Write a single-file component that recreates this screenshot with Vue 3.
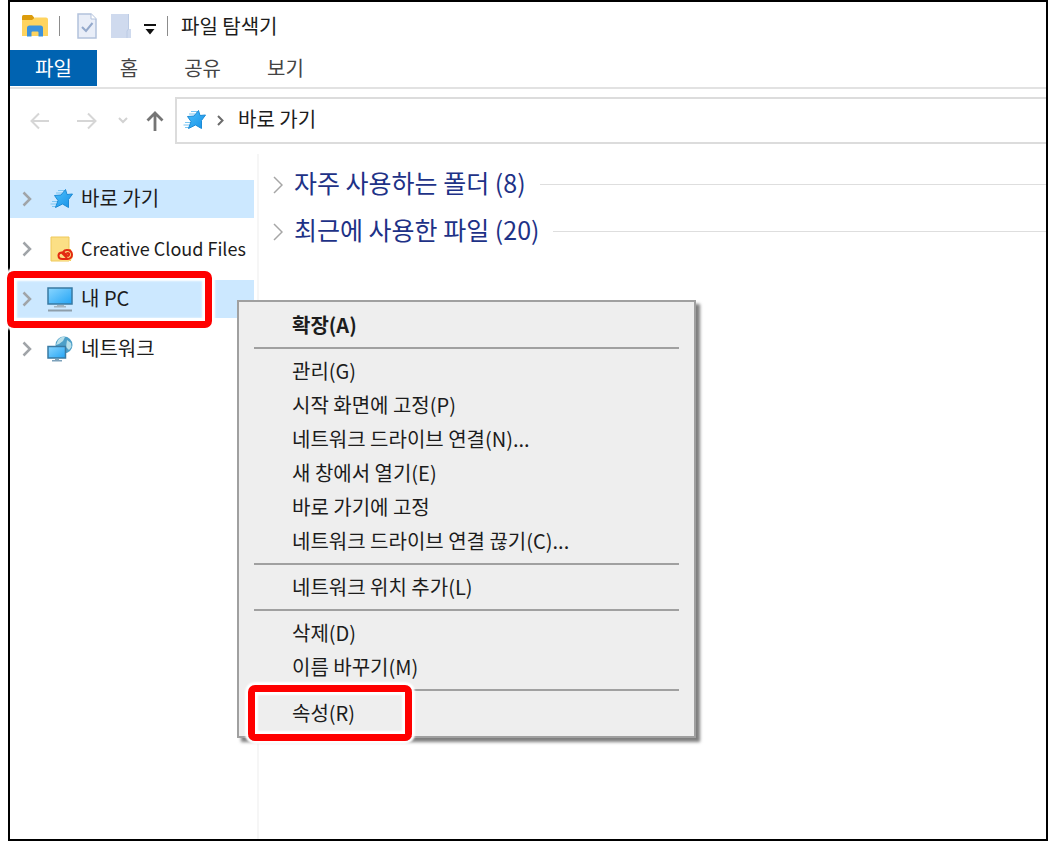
<script setup>
const tabs = ['파일', '홈', '공유', '보기']

const places = [
  { name: '바로 가기', icon: 'star', active: true },
  { name: 'Creative Cloud Files', icon: 'cloud', latin: true },
  { name: '내 PC', icon: 'pc', active: true, marked: true },
  { name: '네트워크', icon: 'network' },
]

const groups = ['자주 사용하는 폴더 (8)', '최근에 사용한 파일 (20)']

const menu = [
  [{ label: '확장(A)', strong: true }],
  [
    { label: '관리(G)' },
    { label: '시작 화면에 고정(P)' },
    { label: '네트워크 드라이브 연결(N)...' },
    { label: '새 창에서 열기(E)' },
    { label: '바로 가기에 고정' },
    { label: '네트워크 드라이브 연결 끊기(C)...' },
  ],
  [{ label: '네트워크 위치 추가(L)' }],
  [{ label: '삭제(D)' }, { label: '이름 바꾸기(M)' }],
  [{ label: '속성(R)', marked: true }],
]
</script>

<template>
  <div class="window">
    <svg class="defs" aria-hidden="true">
      <defs>
        <linearGradient id="starFill" x1="0" y1="0" x2="1" y2="1">
          <stop offset="0" stop-color="#4cc0fc" />
          <stop offset="1" stop-color="#1590e6" />
        </linearGradient>
        <linearGradient id="screenFill" x1="0" y1="0" x2="1" y2="1">
          <stop offset="0" stop-color="#8ad6ff" />
          <stop offset="1" stop-color="#23a4f5" />
        </linearGradient>
        <symbol id="star" viewBox="0 0 24 24">
          <path d="M8 2.500h6M6 5h6M2 13.500h6M0.500 16h6M2 18.500h4" stroke="#7cc6f2" stroke-width="1.200" />
          <path d="M15.500 1.500L17 6.500L22.500 6L18.500 11.500L18.500 19.500L12.500 16L5.500 19.500L8 12.500L4.500 7.500L11 7Z" fill="url(#starFill)" stroke="#1c8bd6" stroke-width="1" stroke-linejoin="round" />
        </symbol>
      </defs>
    </svg>

    <header class="titlebar">
      <svg class="app-icon" width="26" height="24" viewBox="0 0 26 24" aria-hidden="true">
        <path d="M0 2.500Q0 1 1.500 1H10L12.500 4V8H0Z" fill="#dc9c0c" />
        <path d="M0 6H10L13 3.500H24Q26 3.500 26 5.500V22H0Z" fill="#ffd45f" />
        <path d="M5 22.500V14Q5 11.500 7.500 11.500H18.500Q21 11.500 21 14V22.500H16.500V18.500Q16.500 17.500 15.500 17.500H10.500Q9.500 17.500 9.500 18.500V22.500Z" fill="#3c92dc" />
      </svg>
      <i class="bar"></i>
      <button class="tool check" aria-label="속성">
        <svg width="20" height="26" viewBox="0 0 20 26">
          <path d="M1 1H14L19 6V25H1Z" fill="#e9eef8" stroke="#b3c2dc" stroke-width="1.500" />
          <path d="M14 1V6H19" fill="#fff" stroke="#b3c2dc" />
          <path d="M5 14L9 18L15.500 10" fill="none" stroke="#94a9cb" stroke-width="2" />
        </svg>
      </button>
      <button class="tool" aria-label="새 폴더">
        <svg width="21" height="25" viewBox="0 0 21 25">
          <path d="M0 0H18V15H20V24H0Z" fill="#cfdaee" />
          <path d="M17.500 0V15L16 17V24" fill="none" stroke="#bccbe4" />
        </svg>
      </button>
      <button class="tool more" aria-label="빠른 실행 도구 모음 사용자 지정">
        <svg width="12" height="11" viewBox="0 0 12 11">
          <path d="M0 0H12V2H0ZM1.500 5H10.500L6 10.500Z" fill="#111" />
        </svg>
      </button>
      <i class="bar"></i>
      <h1>파일 탐색기</h1>
    </header>

    <nav class="tabs">
      <button v-for="(tab, i) in tabs" :key="tab" class="tab" :class="{ file: i === 0 }">{{ tab }}</button>
    </nav>

    <div class="navbar">
      <button class="nav-button" aria-label="뒤로">
        <svg width="20" height="18" viewBox="0 0 20 18"><path d="M19 9H2M9 1.500L1.500 9L9 16.500" fill="none" stroke="#d6d6d6" stroke-width="2" /></svg>
      </button>
      <button class="nav-button forward" aria-label="앞으로">
        <svg width="20" height="18" viewBox="0 0 20 18"><path d="M0 9H18M11 1.500L18.500 9L11 16.500" fill="none" stroke="#d6d6d6" stroke-width="2" /></svg>
      </button>
      <button class="nav-button recent" aria-label="최근 위치">
        <svg width="10" height="7" viewBox="0 0 10 7"><path d="M1 1L5 5L9 1" fill="none" stroke="#d2d2d2" stroke-width="2" /></svg>
      </button>
      <button class="nav-button up" aria-label="위로">
        <svg width="18" height="20" viewBox="0 0 18 20"><path d="M9 20V2M1.500 9.500L9 2L16.500 9.500" fill="none" stroke="#757575" stroke-width="2.800" /></svg>
      </button>
      <div class="address">
        <svg width="24" height="24" aria-hidden="true"><use href="#star" /></svg>
        <svg class="crumb" width="7" height="11" viewBox="0 0 7 11" aria-hidden="true"><path d="M1 1L5.500 5.500L1 10" fill="none" stroke="#6b6b6b" stroke-width="2" /></svg>
        <a href="#">바로 가기</a>
      </div>
    </div>

    <div class="body">
      <aside class="sidebar">
        <div v-for="place in places" :key="place.name" class="place" :class="{ active: place.active }">
          <button class="place-button" :class="{ latin: place.latin }">
            <svg width="10" height="16" viewBox="0 0 10 16" aria-hidden="true"><path d="M1.500 1.500L8 8L1.500 14.500" fill="none" stroke="#a0a4a8" stroke-width="2.500" /></svg>
            <svg v-if="place.icon === 'star'" class="icon" viewBox="0 0 28 28"><use href="#star" x="3" y="3" width="24" height="24" /></svg>
            <svg v-else-if="place.icon === 'cloud'" class="icon" viewBox="0 0 28 28">
              <path d="M4 2H22V26H4Z" fill="#fbdf85" stroke="#efc95a" />
              <path d="M22 14H24V26H22Z" fill="#f2c64e" />
              <rect x="10" y="14.500" width="16" height="11.500" rx="5.500" fill="#fbdf85" />
              <path d="M20 23L14.500 17.500Q11.500 18 11.500 20.500Q11.500 24 15.500 24H20.500Q25 23.500 25 19.500Q24.500 15 20 15Q17.500 15 16 17L21 21Q22.500 20.500 22 18.500Q21 17.500 19.500 18.500" fill="none" stroke="#e32911" stroke-width="2" />
            </svg>
            <svg v-else-if="place.icon === 'pc'" class="icon" viewBox="0 0 28 28">
              <path d="M1 3H25V19H1Z" fill="url(#screenFill)" stroke="#397aa3" stroke-width="1.500" />
              <path d="M10 20H17V21H19V22.500H7V21H10Z" fill="#a3b4c0" />
              <path d="M1 25.500H25" stroke="#8e9eaa" stroke-width="2" />
            </svg>
            <svg v-else class="icon" viewBox="0 0 28 28">
              <circle cx="17" cy="10" r="8.500" fill="#4d9fc8" />
              <path d="M11 5Q14 1 18 2L16 6L12 9L9 10ZM20 5L24 8L24.500 12L22 15L19 12Z" fill="#b8dfe9" />
              <path d="M1 11.500H18.500V23H1Z" fill="url(#screenFill)" stroke="#397aa3" stroke-width="1.500" />
              <path d="M8 24H12V25H15V26.500H5V25H8Z" fill="#7da2bb" />
            </svg>
            <span>{{ place.name }}</span>
          </button>
          <i v-if="place.marked" class="mark mark-place"></i>
        </div>
      </aside>

      <main class="content">
        <section v-for="group in groups" :key="group" class="group">
          <button class="group-button">
            <svg width="10" height="18" viewBox="0 0 10 18" aria-hidden="true"><path d="M1 1L9 9L1 17" fill="none" stroke="#a6a6a6" stroke-width="1.500" /></svg>
            <span>{{ group }}</span>
          </button>
        </section>
      </main>
    </div>

    <div class="menu" role="menu">
      <div v-for="(section, i) in menu" :key="i" class="section">
        <button v-for="item in section" :key="item.label" class="item" :class="{ strong: item.strong }" role="menuitem">
          {{ item.label }}
          <i v-if="item.marked" class="mark mark-item"></i>
        </button>
      </div>
    </div>
  </div>
</template>

<style>
body {
  background: #fff;
}
</style>

<style scoped>
.window {
  position: relative;
  box-sizing: border-box;
  min-height: 100vh;
  margin-left: 8px;
  border: 2px solid #000;
  display: flex;
  flex-direction: column;
  background: #fff;
  color: #1c1c1c;
  font-family: "Noto Sans CJK KR", sans-serif;
  font-size: 20px;
  line-height: 28px;
}
.defs {
  position: absolute;
  width: 0;
  height: 0;
}
button {
  padding: 0;
  border: 0;
  background: none;
  color: inherit;
  font: inherit;
  text-align: left;
}
svg {
  display: block;
  flex: none;
}
.titlebar {
  display: flex;
  align-items: center;
  height: 48px;
  padding-left: 12px;
}
.bar {
  width: 1px;
  height: 20px;
  margin-left: 11px;
  background: #8c8c8c;
}
.tool {
  margin-left: 14px;
}
.check {
  margin-left: 17px;
}
.more {
  margin: 6px 0 0 12px;
}
h1 {
  margin: 0 0 0 13px;
  font-size: 20px;
  font-weight: 400;
}
.tabs {
  display: flex;
  height: 37px;
  border-bottom: 2px solid #e2e2e2;
}
.tab {
  height: 36px;
  padding: 0 23px;
  color: #444;
}
.file {
  padding: 0 25px;
  background: #0063b1;
  color: #fff;
}
.navbar {
  display: flex;
  align-items: center;
  margin-top: 8px;
  padding-left: 20px;
}
.forward {
  margin-left: 27px;
}
.recent {
  margin-left: 21px;
}
.up {
  margin-left: 18px;
}
.address {
  flex: 1;
  display: flex;
  align-items: center;
  height: 43px;
  margin-left: 11px;
  padding-left: 6px;
  border: 2px solid #dcdcdc;
  border-right: 0;
}
.crumb {
  margin: 0 14px 0 10px;
}
.address a {
  padding-bottom: 3px;
  color: inherit;
  text-decoration: none;
}
.body {
  flex: 1;
  display: flex;
  margin-top: 10px;
}
.sidebar {
  box-sizing: border-box;
  width: 249px;
  padding: 26px 3px 0 0;
  border-right: 2px solid #f6f6f6;
  display: flex;
  flex-direction: column;
  gap: 12px;
}
.place {
  position: relative;
}
.place-button {
  display: flex;
  align-items: center;
  width: 100%;
  height: 38px;
  padding-left: 12px;
  white-space: nowrap;
}
.place-button span {
  padding-bottom: 3px;
}
.latin {
  font-size: 18px;
}
.active {
  background: #cce8ff;
}
.icon {
  width: 28px;
  height: 28px;
  margin: 0 6px 0 15px;
}
.content {
  flex: 1;
  padding: 7px 0 0 14px;
}
.group-button {
  display: flex;
  align-items: center;
  width: 100%;
  height: 47px;
  color: #1e3287;
  font-size: 25px;
}
.group-button span {
  margin: 0 14px 0 11px;
  padding-bottom: 5px;
}
.group-button::after {
  content: "";
  flex: 1;
  height: 1px;
  background: #dedede;
}
.menu {
  position: absolute;
  top: 298px;
  left: 227px;
  box-sizing: border-box;
  width: 459px;
  padding: 6px 15px;
  border: 2px solid #a0a0a0;
  background: #eee;
  box-shadow: 4px 4px 3px rgba(0, 0, 0, 0.5);
}
.section + .section {
  margin-top: 5px;
  padding-top: 5px;
  border-top: 2px solid #a0a0a0;
}
.item {
  position: relative;
  display: block;
  width: 100%;
  height: 34px;
  padding: 0 0 1px 38px;
  white-space: nowrap;
}
.strong {
  font-weight: 700;
}
.mark {
  position: absolute;
  box-sizing: border-box;
  border: 7px solid #f00;
  border-radius: 7px;
  box-shadow: 0 0 2px 3px #fff, inset 0 0 2px 3px #fff;
  pointer-events: none;
}
.mark-place {
  top: -9px;
  left: -3px;
  width: 205px;
  height: 57px;
}
.mark-item {
  top: -11px;
  left: -6px;
  width: 164px;
  height: 56px;
}
</style>
